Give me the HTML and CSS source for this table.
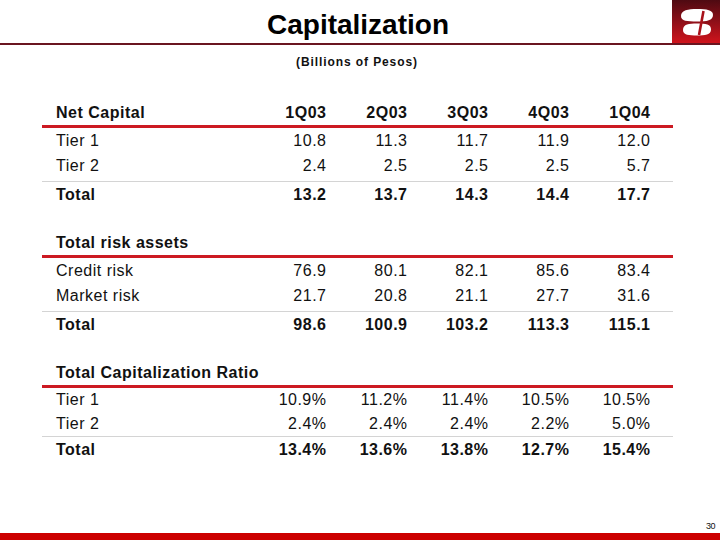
FILE: index.html
```html
<!DOCTYPE html>
<html>
<head>
<meta charset="utf-8">
<link rel="stylesheet" href="styles.css">
</head>
<body>
<header class="top">
  <div class="spacer"></div>
  <h1 class="title">Capitalization</h1>
  <div class="logo-cell">
    <div class="logo">
      <svg width="48" height="43" viewBox="0 0 48 43">
        <defs>
          <linearGradient id="lg" x1="0" y1="0" x2="0" y2="1">
            <stop offset="0" stop-color="#4e0a12"/>
            <stop offset="0.5" stop-color="#8e0f18"/>
            <stop offset="1" stop-color="#d0141c"/>
          </linearGradient>
        </defs>
        <rect width="48" height="43" fill="url(#lg)"/>
        <path d="M9 16 C9 10 16 9 25 9 C35 9 41 10 41 15 C41 20.5 35 21.5 25 21.5 C15 21.5 9 21 9 16 Z" fill="#fff"/>
        <path d="M11 30 C11 24 17 23.5 25 23.5 C34 23.5 39 24 39 29.5 C39 35 33 35.5 25 35.5 C17 35.5 11 35 11 30 Z" fill="#fff"/>
        <path d="M31.5 11 L27 35" stroke="#a8121b" stroke-width="2.6" fill="none"/>
      </svg>
    </div>
  </div>
</header>
<p class="subtitle">(Billions of Pesos)</p>

<section class="block first">
  <div class="row head"><span class="label">Net Capital</span><span>1Q03</span><span>2Q03</span><span>3Q03</span><span>4Q03</span><span>1Q04</span></div>
  <div class="row"><span class="label">Tier 1</span><span>10.8</span><span>11.3</span><span>11.7</span><span>11.9</span><span>12.0</span></div>
  <div class="row"><span class="label">Tier 2</span><span>2.4</span><span>2.5</span><span>2.5</span><span>2.5</span><span>5.7</span></div>
  <div class="row total"><span class="label">Total</span><span>13.2</span><span>13.7</span><span>14.3</span><span>14.4</span><span>17.7</span></div>
</section>

<section class="block">
  <div class="row head"><span class="label">Total risk assets</span></div>
  <div class="row"><span class="label">Credit risk</span><span>76.9</span><span>80.1</span><span>82.1</span><span>85.6</span><span>83.4</span></div>
  <div class="row"><span class="label">Market risk</span><span>21.7</span><span>20.8</span><span>21.1</span><span>27.7</span><span>31.6</span></div>
  <div class="row total"><span class="label">Total</span><span>98.6</span><span>100.9</span><span>103.2</span><span>113.3</span><span>115.1</span></div>
</section>

<section class="block ratio">
  <div class="row head"><span class="label">Total Capitalization Ratio</span></div>
  <div class="row"><span class="label">Tier 1</span><span>10.9%</span><span>11.2%</span><span>11.4%</span><span>10.5%</span><span>10.5%</span></div>
  <div class="row"><span class="label">Tier 2</span><span>2.4%</span><span>2.4%</span><span>2.4%</span><span>2.2%</span><span>5.0%</span></div>
  <div class="row total"><span class="label">Total</span><span>13.4%</span><span>13.6%</span><span>13.8%</span><span>12.7%</span><span>15.4%</span></div>
</section>

<footer class="foot">
  <div class="pagenum">30</div>
  <div class="bar"></div>
</footer>
</body>
</html>
```

FILE: styles.css
```css
html, body {
  margin: 0;
  padding: 0;
  background: #fff;
}
body {
  width: 720px;
  height: 540px;
  overflow: hidden;
  font-family: "Liberation Sans", Arial, sans-serif;
  color: #111;
  display: flex;
  flex-direction: column;
}
.top {
  display: grid;
  grid-template-columns: 1fr auto 1fr;
  height: 43px;
  border-bottom: 2px solid #6a1520;
}
.title {
  margin: 0;
  font-size: 28px;
  font-weight: bold;
  line-height: 43px;
  padding-top: 3px;
  box-sizing: border-box;
  height: 43px;
  color: #000;
  transform: translateX(-2px);
}
.logo-cell {
  display: flex;
  justify-content: flex-end;
}
.logo {
  width: 48px;
  height: 43px;
}
.logo svg {
  display: block;
}
.subtitle {
  margin: 10px 0 0;
  text-align: center;
  font-size: 12px;
  line-height: 14px;
  font-weight: bold;
  letter-spacing: 0.9px;
  transform: translateX(-3px);
}
.block {
  margin-left: 42px;
  width: 631px;
  margin-top: 24px;
}
.block.first {
  margin-top: 32px;
}
.row {
  display: grid;
  grid-template-columns: 189px repeat(5, 81px);
  padding-left: 14px;
  height: 25px;
  line-height: 25px;
  font-size: 16px;
  letter-spacing: 0.5px;
  white-space: nowrap;
}
.row span {
  text-align: right;
  margin-right: -0.5px;
}
.row .label {
  text-align: left;
}
.head {
  height: 24px;
  line-height: 24px;
  font-weight: bold;
  border-bottom: 3px solid #cc1a22;
}
.total {
  font-weight: bold;
  margin-top: 3px;
  border-top: 1px solid #d4d4d4;
  height: 25px;
}
.ratio .row {
  height: 24px;
  line-height: 24px;
}
.ratio .total {
  margin-top: 0;
  height: 25px;
  line-height: 25px;
}
.foot {
  margin-top: auto;
  display: flex;
  flex-direction: column;
}
.pagenum {
  align-self: flex-end;
  margin-right: 5px;
  font-size: 9px;
  line-height: 10px;
  letter-spacing: -0.5px;
  margin-bottom: 2px;
}
.bar {
  height: 7px;
  background: #cc0000;
}
```
